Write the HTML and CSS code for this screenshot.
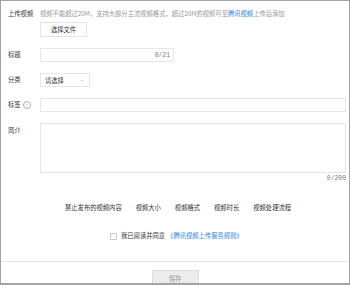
FILE: index.html
```html
<!DOCTYPE html>
<html lang="zh-CN">
<head>
    <meta charset="UTF-8">
    <title>上传视频</title>
    <link rel="stylesheet" href="styles.css">
</head>
<body>
    <div class="frame">
        <!-- upload -->
        <div class="row row-upload">
            <span class="label">上传视频</span>
            <div class="field">
                <p class="hint">视频不能超过20M，支持大部分主流视频格式，超过20M的视频可至<a class="link">腾讯视频</a>上传后添加</p>
                <button class="btn-file">选择文件</button>
            </div>
        </div>

        <div class="row row-title">
            <span class="label">标题</span>
            <div class="input input-title"><span class="count">0/21</span></div>
        </div>

        <div class="row row-cat">
            <span class="label">分类</span>
            <div class="input select">
                <span>请选择</span>
                <span class="caret">&#8964;</span>
            </div>
        </div>

        <div class="row row-tag">
            <span class="label">标签 <i class="help">?</i></span>
            <div class="input input-wide"></div>
        </div>

        <div class="row row-desc">
            <span class="label label-top">简介</span>
            <div class="field">
                <div class="input textarea"></div>
                <div class="count-below">0/200</div>
            </div>
        </div>

        <ul class="rules">
            <li>禁止发布的视频内容</li>
            <li>视频大小</li>
            <li>视频格式</li>
            <li>视频时长</li>
            <li>视频处理流程</li>
        </ul>

        <div class="agree">
            <span class="checkbox"></span>
            <span>我已阅读并同意</span>
            <a class="link">《腾讯视频上传服务规则》</a>
        </div>

        <div class="footer">
            <button class="btn-save">保存</button>
        </div>
    </div>
</body>
</html>
```

FILE: styles.css
```css
body {
    margin: 0;
    padding: 0;
    font-family: "Noto Sans CJK SC", "Noto Sans", sans-serif;
    font-size: 6.3px;
    color: #333;
}

.frame {
    width: 350px;
    height: 285px;
    box-sizing: border-box;
    border: 1px solid #a3a3a3;
    border-bottom-width: 2px;
    background-color: #fff;
    overflow: hidden;
}

.row {
    display: flex;
    align-items: center;
    padding: 0 3px 0 7px;
}

.label {
    width: 32px;
    flex-shrink: 0;
    line-height: 10px;
    display: flex;
    align-items: center;
}

.label-top {
    align-self: flex-start;
    margin-top: 3px;
}

.field {
    flex: 1;
}

.row-upload {
    align-items: flex-start;
    margin-top: 8px;
}

.hint {
    margin: 0;
    line-height: 10px;
    color: #999;
    white-space: nowrap;
}

.link {
    color: #2e86de;
    text-decoration: none;
}

.btn-file {
    display: block;
    margin-top: 3px;
    width: 47px;
    height: 15px;
    padding: 0;
    border: 1px solid #e3e3e3;
    background-color: #fff;
    font-family: inherit;
    font-size: 6.3px;
    color: #333;
}

.input {
    box-sizing: border-box;
    height: 14px;
    border: 1px solid #e6e6e6;
    background-color: #fff;
}

.row-title {
    margin-top: 11px;
}

.input-title {
    width: 134px;
    display: flex;
    align-items: center;
    justify-content: flex-end;
    padding-right: 3px;
}

.count,
.count-below {
    font-family: "Liberation Mono", monospace;
    font-size: 6.4px;
    color: #777;
}

.row-cat {
    margin-top: 11px;
}

.select {
    width: 50px;
    display: flex;
    align-items: center;
    justify-content: space-between;
    padding: 0 5px 0 4px;
}

.caret {
    color: #999;
    font-size: 5px;
    margin-top: -3px;
}

.row-tag {
    margin-top: 11px;
}

.help {
    display: inline-block;
    width: 6px;
    height: 6px;
    margin-left: 2px;
    border-radius: 50%;
    border: 1px solid #aaa;
    font-style: normal;
    font-size: 4.5px;
    line-height: 6px;
    text-align: center;
    color: #999;
}

.input-wide {
    flex: 1;
    height: 14px;
}

.row-desc {
    align-items: flex-start;
    margin-top: 11px;
}

.textarea {
    height: 50px;
}

.count-below {
    text-align: right;
    line-height: 10px;
    margin-top: 1px;
}

.rules {
    list-style: none;
    margin: 19px 0 0;
    padding: 0 0 0 64px;
    display: flex;
    gap: 14px;
    line-height: 10px;
}

.agree {
    margin-top: 18px;
    display: flex;
    align-items: center;
    padding-left: 109px;
    line-height: 10px;
}

.checkbox {
    box-sizing: border-box;
    width: 7px;
    height: 7px;
    border: 1px solid #ccc;
    margin-right: 4px;
}

.agree .link {
    margin-left: 2px;
}

.footer {
    margin-top: 20px;
    border-top: 1px solid #e8e8e8;
    text-align: center;
    padding-top: 8px;
}

.btn-save {
    width: 47px;
    height: 17px;
    padding: 0;
    border: 1px solid #dcdcdc;
    background-color: #ececee;
    color: #999;
    font-family: inherit;
    font-size: 6.3px;
}
```
